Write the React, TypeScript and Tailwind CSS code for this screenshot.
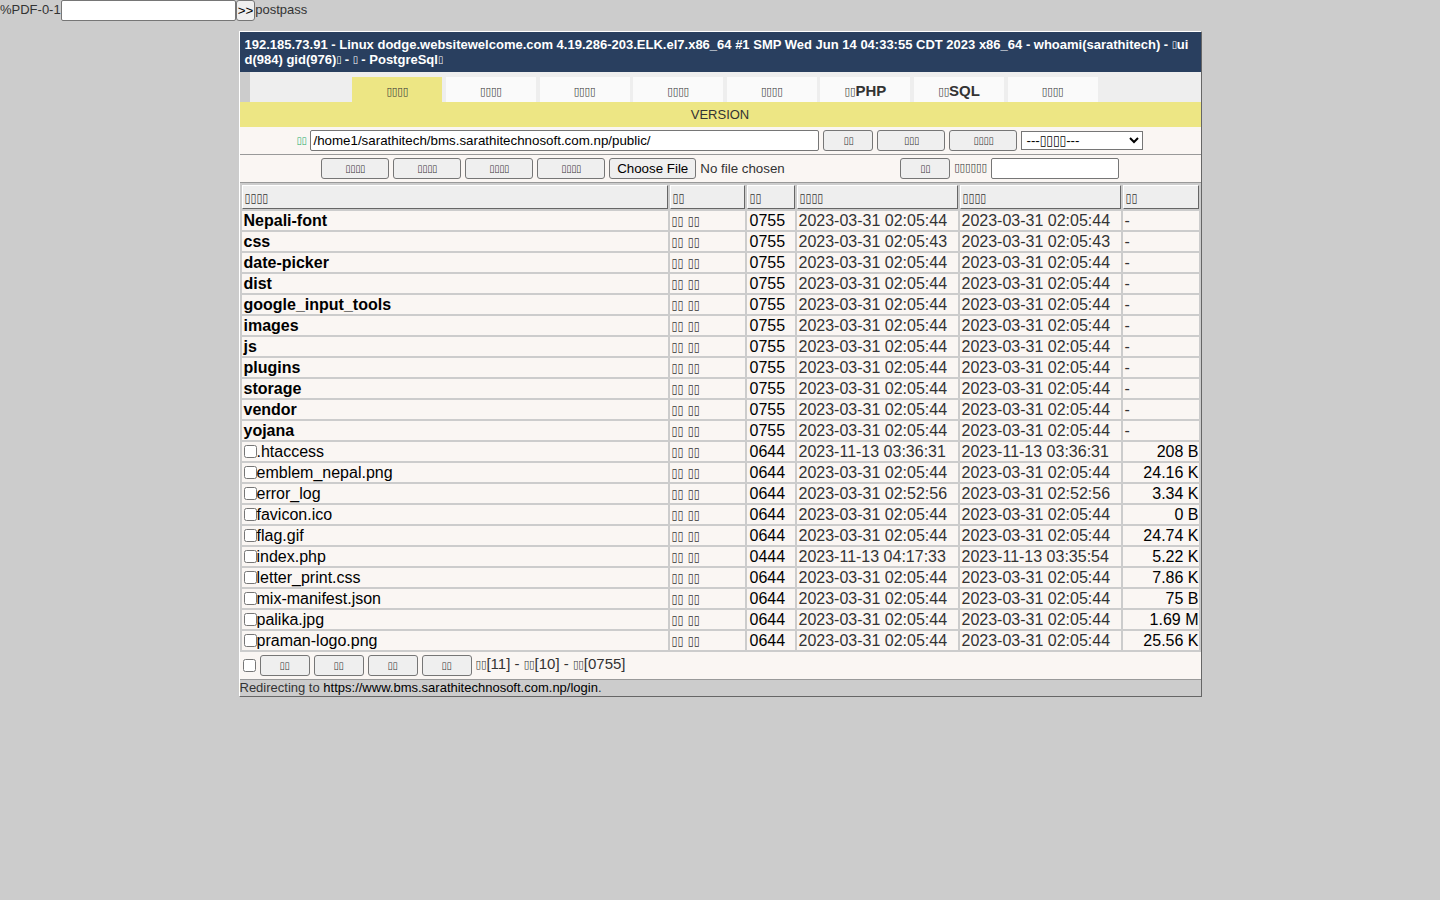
import type { ReactNode } from "react";

const BOX = "\u25AF";

const boxSizes = {
  small: "text-[10px]",
  medium: "text-[11px]",
  large: "text-[12px]",
};

function Boxes({ count, size = "small" }: { count: number; size?: keyof typeof boxSizes }) {
  return (
    <span
      className={
        boxSizes[size] +
        " align-[1px] leading-none font-['DejaVu_Sans_Condensed','DejaVu_Sans',sans-serif] font-normal"
      }
    >
      {BOX.repeat(count)}
    </span>
  );
}

const tabs = [
  { boxes: 4, text: "" },
  { boxes: 4, text: "" },
  { boxes: 4, text: "" },
  { boxes: 4, text: "" },
  { boxes: 4, text: "" },
  { boxes: 2, text: "PHP" },
  { boxes: 2, text: "SQL" },
  { boxes: 4, text: "" },
];

const folders = [
  ["Nepali-font", "2023-03-31 02:05:44"],
  ["css", "2023-03-31 02:05:43"],
  ["date-picker", "2023-03-31 02:05:44"],
  ["dist", "2023-03-31 02:05:44"],
  ["google_input_tools", "2023-03-31 02:05:44"],
  ["images", "2023-03-31 02:05:44"],
  ["js", "2023-03-31 02:05:44"],
  ["plugins", "2023-03-31 02:05:44"],
  ["storage", "2023-03-31 02:05:44"],
  ["vendor", "2023-03-31 02:05:44"],
  ["yojana", "2023-03-31 02:05:44"],
];

const files = [
  [".htaccess", "0644", "2023-11-13 03:36:31", "2023-11-13 03:36:31", "208 B"],
  ["emblem_nepal.png", "0644", "2023-03-31 02:05:44", "2023-03-31 02:05:44", "24.16 K"],
  ["error_log", "0644", "2023-03-31 02:52:56", "2023-03-31 02:52:56", "3.34 K"],
  ["favicon.ico", "0644", "2023-03-31 02:05:44", "2023-03-31 02:05:44", "0 B"],
  ["flag.gif", "0644", "2023-03-31 02:05:44", "2023-03-31 02:05:44", "24.74 K"],
  ["index.php", "0444", "2023-11-13 04:17:33", "2023-11-13 03:35:54", "5.22 K"],
  ["letter_print.css", "0644", "2023-03-31 02:05:44", "2023-03-31 02:05:44", "7.86 K"],
  ["mix-manifest.json", "0644", "2023-03-31 02:05:44", "2023-03-31 02:05:44", "75 B"],
  ["palika.jpg", "0644", "2023-03-31 02:05:44", "2023-03-31 02:05:44", "1.69 M"],
  ["praman-logo.png", "0644", "2023-03-31 02:05:44", "2023-03-31 02:05:44", "25.56 K"],
];

const columns = [
  { boxes: 4, width: "w-auto" },
  { boxes: 2, width: "w-[75px]" },
  { boxes: 2, width: "w-[48px]" },
  { boxes: 4, width: "w-[161px]" },
  { boxes: 4, width: "w-[161px]" },
  { boxes: 2, width: "w-[76px]" },
];

const fieldClass =
  "h-[21px] rounded-[2px] border border-[#767676] bg-white px-[2px] text-black [font-size:revert]";

function Button({ boxes, wide = false }: { boxes: number; wide?: boolean }) {
  return (
    <button
      type="button"
      className={
        (wide ? "w-[68px]" : "w-[50px]") +
        " h-[21px] shrink-0 rounded-[3px] border border-[#767676] bg-[#efefef] text-[#333333] [font-size:revert]"
      }
    >
      <Boxes count={boxes} />
    </button>
  );
}

function Cell({ children, className = "pl-[2px]" }: { children: ReactNode; className?: string }) {
  return <td className={"bg-[#faf6f3] py-0 pr-0 " + className}>{children}</td>;
}

function Actions() {
  return (
    <Cell>
      <a href="#edit"><Boxes count={2} size="large" /></a>{" "}
      <a href="#rename"><Boxes count={2} size="large" /></a>
    </Cell>
  );
}

export default function App() {
  return (
    <div className="min-h-screen bg-[#cccccc] font-['Liberation_Sans',Arial,sans-serif] text-[13px] leading-[15px] text-[#333333]">
      <form className="flex items-start">
        <label htmlFor="pass" className="pt-[2px]">%PDF-0-1</label>
        <input id="pass" type="text" className={fieldClass + " w-[175px]"} />
        <button
          type="button"
          className="h-[21px] rounded-[3px] border border-[#767676] bg-[#efefef] px-px text-black [font-size:revert]"
        >
          &gt;&gt;
        </button>
        <span className="pt-[2px]">postpass</span>
      </form>

      <main className="mx-auto mt-[10px] w-full max-w-[963px] border border-t-white border-r-[#666666] border-b-[#666666] border-l-white">
        <header className="bg-[#293f5f] p-[5px] font-bold break-all text-white">
          192.185.73.91 - Linux dodge.websitewelcome.com 4.19.286-203.ELK.el7.x86_64 #1 SMP Wed Jun 14
          04:33:55 CDT 2023 x86_64 - whoami(sarathitech) - <Boxes count={1} />uid(984) gid(976)
          <Boxes count={1} /> - <Boxes count={1} /> - PostgreSql<Boxes count={1} />
        </header>

        <nav className="flex pl-[10px]">
          <div className="flex-1 bg-[#eeeeee] pt-[5px] text-center">
            {tabs.map((tab, i) => (
              <span key={i}>
                <a
                  href={"#tab-" + (i + 1)}
                  className={
                    (i === 0 ? "bg-[#ede684]" : "bg-[#fafafa]") +
                    " inline-block h-[25px] w-[90px] pt-[3px] align-top text-[15px] leading-[22px] font-bold text-[#333333]"
                  }
                >
                  <Boxes count={tab.boxes} size="medium" />
                  {tab.text}
                </a>{" "}
              </span>
            ))}
          </div>
        </nav>

        <div className="bg-[#ede684] py-[5px] text-center">VERSION</div>

        <form className="flex items-center justify-center gap-1 border-b border-[#999999] bg-[#faf6f3] py-[3px]">
          <label htmlFor="path" className="text-[#22aa66]"><Boxes count={2} /></label>
          <input
            id="path"
            type="text"
            defaultValue="/home1/sarathitech/bms.sarathitechnosoft.com.np/public/"
            className={fieldClass + " w-[509px]"}
          />
          <Button boxes={2} />
          <Button boxes={3} wide />
          <Button boxes={4} wide />
          <select
            aria-label="Directory"
            className="h-[19px] w-[122px] border border-[#767676] bg-white font-['Liberation_Sans','DejaVu_Sans_Condensed',sans-serif] text-black [font-size:revert]"
          >
            <option>---{BOX.repeat(4)}---</option>
          </select>
        </form>

        <form className="flex items-start justify-center gap-1 border-b border-[#999999] bg-[#faf6f3] py-[3px]">
          <Button boxes={4} wide />
          <Button boxes={4} wide />
          <Button boxes={4} wide />
          <Button boxes={4} wide />
          <input
            type="file"
            aria-label="Upload file"
            className="h-[21px] w-[287px] [font-size:revert] file:mr-1 file:h-[21px] file:rounded-[3px] file:border file:border-solid file:border-[#767676] file:bg-[#efefef] file:px-[7px] file:text-black"
          />
          <Button boxes={2} />
          <label htmlFor="find" className="text-[15px] leading-[18px]"><Boxes count={6} size="medium" /></label>
          <input id="find" type="text" className={fieldClass + " w-[128px]"} />
        </form>

        <table className="w-full table-fixed border-separate border-spacing-[2px] text-[16px] leading-[19px]">
          <thead>
            <tr>
              {columns.map((column, i) => (
                <th
                  key={i}
                  className={
                    column.width +
                    " h-[24px] border border-t-white border-r-[#666666] border-b-[#666666] border-l-white bg-[#eeeeee] p-0 pl-[2px] text-left font-normal"
                  }
                >
                  <Boxes count={column.boxes} size="large" />
                </th>
              ))}
            </tr>
          </thead>
          <tbody>
            {folders.map(([name, time]) => (
              <tr key={name}>
                <Cell><a href={"#" + name} className="font-bold text-black">{name}</a></Cell>
                <Actions />
                <Cell className="pl-[3px]"><a href={"#mode-" + name} className="text-black">0755</a></Cell>
                <Cell>{time}</Cell>
                <Cell>{time}</Cell>
                <Cell>-</Cell>
              </tr>
            ))}
            {files.map(([name, mode, created, modified, size]) => (
              <tr key={name}>
                <Cell>
                  <div className="flex items-center">
                    <input type="checkbox" aria-label={name} className="size-[13px]" />
                    <a href={"#" + name} className="text-black">{name}</a>
                  </div>
                </Cell>
                <Actions />
                <Cell className="pl-[3px]"><a href={"#mode-" + name} className="text-black">{mode}</a></Cell>
                <Cell>{created}</Cell>
                <Cell>{modified}</Cell>
                <Cell className="text-right"><a href={"#get-" + name} className="text-black">{size}</a></Cell>
              </tr>
            ))}
          </tbody>
        </table>

        <form className="flex items-start gap-1 border-b border-[#999999] bg-[#faf6f3] py-[3px] pl-[3px]">
          <input type="checkbox" aria-label="Select all" className="mt-1 size-[13px]" />
          <Button boxes={2} />
          <Button boxes={2} />
          <Button boxes={2} />
          <Button boxes={2} />
          <span className="text-[15px] leading-[18px]">
            <Boxes count={2} size="medium" />[11] - <Boxes count={2} size="medium" />[10] -{" "}
            <Boxes count={2} size="medium" />[0755]
          </span>
        </form>

        <footer className="leading-[16px]">
          Redirecting to{" "}
          <a href="https://www.bms.sarathitechnosoft.com.np/login" className="text-black">
            https://www.bms.sarathitechnosoft.com.np/login
          </a>
          .
        </footer>
      </main>
    </div>
  );
}
